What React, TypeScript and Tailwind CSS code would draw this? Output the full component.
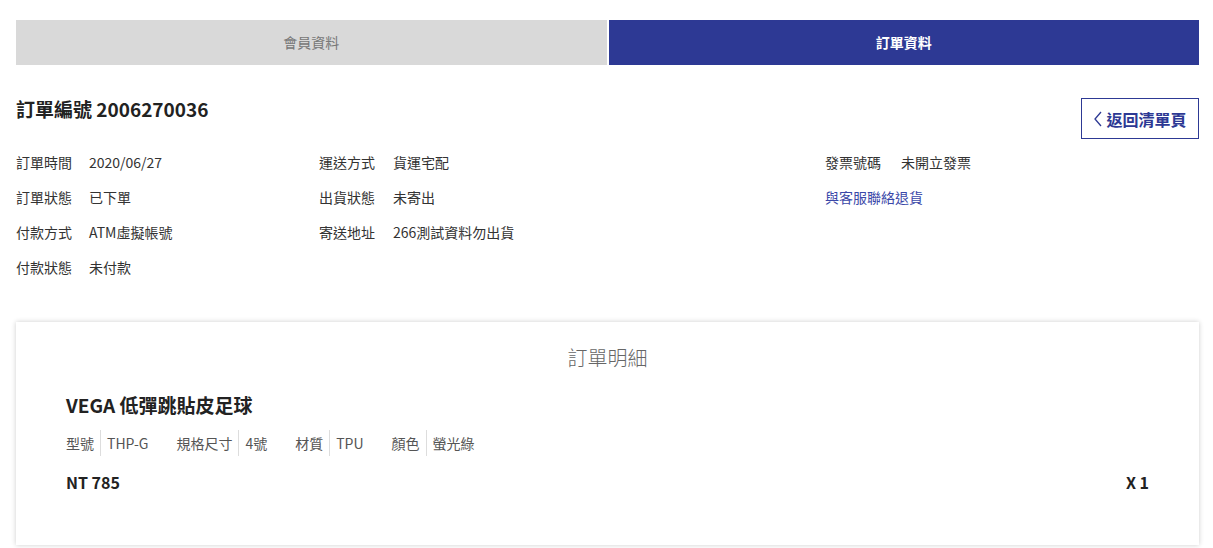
const font = { fontFamily: '"Noto Sans CJK TC", "Noto Sans", sans-serif' };

const InfoRow = ({ label, value, labelWidth = "w-[73px]" }: { label: string; value: string; labelWidth?: string }) => (
  <div className="flex h-[35px] items-center text-[14px] text-[#333]">
    <span className={labelWidth}>{label}</span>
    <span>{value}</span>
  </div>
);

const Spec = ({ label, value }: { label: string; value: string }) => (
  <div className="flex items-center mr-[28px]">
    <span className="pr-[6px] border-r border-[#ddd] leading-[26px]">{label}</span>
    <span className="pl-[6px]">{value}</span>
  </div>
);

const App = () => {
  return (
    <div className="min-h-screen bg-white" style={font}>
      <div className="pl-4 pr-[14px] pt-5">
        <div className="flex gap-[2px] h-[45px]">
          <div className="flex-1 bg-[#d9d9d9] flex items-center justify-center text-[14px] text-[#777]">會員資料</div>
          <div className="flex-1 bg-[#2d3994] flex items-center justify-center text-[14px] font-bold text-white">訂單資料</div>
        </div>

        <div className="flex items-start justify-between mt-[33px]">
          <h2 className="text-[19px] font-bold text-[#222] leading-[24px] mt-[-1px]">訂單編號 2006270036</h2>
          <button className="w-[118px] h-[41px] border border-[#2d3994] flex items-center justify-center text-[#2d3994] font-bold text-[16px]">
            <svg width="10" height="16" viewBox="0 0 10 16" className="mr-[3px]">
              <path d="M8 1 L2 8 L8 15" fill="none" stroke="#2d3994" strokeWidth="1.3" />
            </svg>
            返回清單頁
          </button>
        </div>

        <div className="flex mt-[6px]">
          <div className="w-[303px]">
            <InfoRow label="訂單時間" value="2020/06/27" />
            <InfoRow label="訂單狀態" value="已下單" />
            <InfoRow label="付款方式" value="ATM虛擬帳號" />
            <InfoRow label="付款狀態" value="未付款" />
          </div>
          <div className="w-[506px]">
            <InfoRow label="運送方式" value="貨運宅配" labelWidth="w-[74px]" />
            <InfoRow label="出貨狀態" value="未寄出" labelWidth="w-[74px]" />
            <InfoRow label="寄送地址" value="266測試資料勿出貨" labelWidth="w-[74px]" />
          </div>
          <div className="flex-1">
            <InfoRow label="發票號碼" value="未開立發票" labelWidth="w-[76px]" />
            <div className="h-[35px] flex items-center text-[14px] text-[#3a47a8]">與客服聯絡退貨</div>
          </div>
        </div>

        <div className="mt-[37px] bg-white shadow-[0_0_5px_rgba(0,0,0,0.2)] px-[50px] pt-[22px] pb-[51px]">
          <h3 className="text-center text-[20px] text-[#666] font-light leading-[28px]">訂單明細</h3>
          <div className="mt-[20px] text-[19px] font-bold text-[#222] leading-[26px]">VEGA 低彈跳貼皮足球</div>
          <div className="flex items-center mt-[12px] text-[14px] text-[#555]">
            <Spec label="型號" value="THP-G" />
            <Spec label="規格尺寸" value="4號" />
            <Spec label="材質" value="TPU" />
            <Spec label="顏色" value="螢光綠" />
          </div>
          <div className="flex justify-between items-center mt-[14px] text-[16px] font-bold text-[#222]">
            <span>NT 785</span>
            <span>X 1</span>
          </div>
        </div>
      </div>
    </div>
  );
};

export default App;
